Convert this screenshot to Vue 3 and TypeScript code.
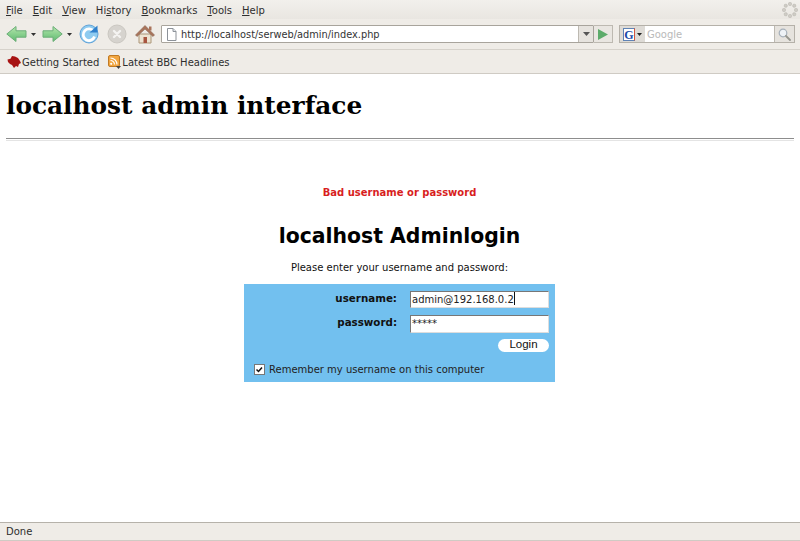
<script setup lang="ts">
const menus: [string, string, string][] = [
  ['', 'F', 'ile'],
  ['', 'E', 'dit'],
  ['', 'V', 'iew'],
  ['Hi', 's', 'tory'],
  ['', 'B', 'ookmarks'],
  ['', 'T', 'ools'],
  ['', 'H', 'elp'],
]
const dots = Array.from({ length: 8 }, (_, i) => {
  const a = (i * Math.PI) / 4
  return { x: 8 + 6 * Math.cos(a) - 1.5, y: 8 + 6 * Math.sin(a) - 1.5 }
})
</script>

<template>
  <div class="window">
    <div class="menubar">
      <span v-for="m in menus" :key="m[2]" class="menu">{{ m[0] }}<u>{{ m[1] }}</u>{{ m[2] }}</span>
      <svg class="throbber" width="16" height="16" viewBox="0 0 16 16">
        <rect v-for="(d, i) in dots" :key="i" :x="d.x" :y="d.y" width="3" height="3" rx="1" fill="#cfccc6" stroke="#b5b2ab" stroke-width=".5" />
      </svg>
    </div>

    <div class="toolbar">
      <svg class="ic" width="21" height="20" viewBox="0 0 21 20">
        <defs>
          <linearGradient id="arrow" x1="0" y1="0" x2="0" y2="1">
            <stop offset="0" stop-color="#b4e6ac" />
            <stop offset="1" stop-color="#5fbb70" />
          </linearGradient>
        </defs>
        <path d="M.8 10 10 2.500v4.300h10v6.400H10v4.300z" fill="url(#arrow)" stroke="#6cae78" stroke-linejoin="round" />
      </svg>
      <svg class="drop" width="5" height="3" viewBox="0 0 5 3"><path d="M0 0h5L2.500 3z" fill="#333" /></svg>
      <svg class="ic" width="21" height="20" viewBox="0 0 21 20">
        <path d="M20.200 10 11 2.500v4.300H1v6.400h10v4.300z" fill="url(#arrow)" stroke="#6cae78" stroke-linejoin="round" />
      </svg>
      <svg class="drop" width="5" height="3" viewBox="0 0 5 3"><path d="M0 0h5L2.500 3z" fill="#333" /></svg>
      <svg class="ic" width="20" height="20" viewBox="0 0 20 20">
        <circle cx="10" cy="10" r="9" fill="#8ecbf0" stroke="#62a3d8" />
        <path d="M14.800 7.500A5.800 5.800 0 1 0 15.500 12.500" fill="none" stroke="#fff" stroke-width="2.800" />
        <path d="M10.500 8.500h8V1.500z" fill="#2f80cc" />
      </svg>
      <svg class="ic stop" width="20" height="20" viewBox="0 0 20 20">
        <circle cx="10" cy="10" r="9" fill="#d6d3ce" stroke="#cac7c1" />
        <path d="m7 7 6 6m0-6-6 6" stroke="#f4f3f1" stroke-width="2.400" stroke-linecap="round" />
      </svg>
      <svg class="ic home" width="20" height="20" viewBox="0 0 20 20">
        <path d="M4 10h12v9H4z" fill="#eee4d2" stroke="#ab9678" />
        <path d="M.5 11 10 1.500 19.500 11 18 12.500 10 5 2 12.500z" fill="#a9735a" stroke="#8a6a55" stroke-width=".6" />
        <path d="M8.500 13h3.500v6H8.500z" fill="#a8553f" />
        <path d="M14 2.500h2.500v4H14z" fill="#a9735a" />
      </svg>

      <div class="urlbar">
        <svg class="page" width="11" height="13" viewBox="0 0 11 13">
          <path d="M1.500.5h5.500l3 3v9h-8.500z" fill="#fff" stroke="#8d9299" />
          <path d="M7 .5v3h3" fill="#dfe3e8" stroke="#8d9299" />
        </svg>
        <span class="url">http://localhost/serweb/admin/index.php</span>
        <span class="urldrop"><svg width="7" height="4" viewBox="0 0 7 4"><path d="M0 0h7L3.500 4z" fill="#555" /></svg></span>
      </div>
      <span class="go"><svg width="10" height="11" viewBox="0 0 10 11"><path d="M0 0 10 5.500 0 11z" fill="#5cab6a" /></svg></span>

      <div class="search">
        <span class="engine">
          <span class="g">G</span>
          <svg width="5" height="3" viewBox="0 0 5 3"><path d="M0 0h5L2.500 3z" fill="#222" /></svg>
        </span>
        <span class="placeholder">Google</span>
        <span class="mag">
          <svg width="13" height="13" viewBox="0 0 13 13">
            <circle cx="5" cy="5" r="3.800" fill="#eef2f6" stroke="#a6b0ba" stroke-width="1.200" />
            <path d="m8 8 4 4" stroke="#96968f" stroke-width="1.800" stroke-linecap="round" />
          </svg>
        </span>
      </div>
    </div>

    <div class="bookmarks">
      <span class="bm">
        <svg width="14" height="14" viewBox="0 0 14 14">
          <path d="M1 7 .5 4.500l3-.7L5 1l3 .5 3 1.500 2 3 1 2-2 1-1 3-2-1-2 2-2-3-2-1z" fill="#a81414" />
        </svg>
        Getting Started
      </span>
      <span class="bm">
        <svg width="13" height="14" viewBox="0 0 13 14">
          <rect x=".5" y=".5" width="11" height="11" rx="1.500" fill="#f2a640" stroke="#c07a24" />
          <circle cx="3.200" cy="8.800" r="1.100" fill="#fff" />
          <path d="M2.500 5.500a4 4 0 0 1 4 4M2.500 3a6.500 6.500 0 0 1 6.500 6.500" fill="none" stroke="#fff" stroke-width="1.200" />
          <path d="M8 11h5l-2.500 3z" fill="#444" />
        </svg>
        Latest BBC Headlines
      </span>
    </div>

    <main class="content">
      <h1>localhost admin interface</h1>
      <hr />
      <p class="error">Bad username or password</p>
      <h2>localhost Adminlogin</h2>
      <p class="hint">Please enter your username and password:</p>
      <form class="login" @submit.prevent>
        <div class="row first">
          <span class="lbl">username:</span>
          <div class="field">admin@192.168.0.2<i class="caret"></i></div>
        </div>
        <div class="row second">
          <span class="lbl">password:</span>
          <div class="field pw">*****</div>
        </div>
        <div class="btnrow"><button type="button">Login</button></div>
        <div class="remember">
          <span class="check">
            <svg width="9" height="9" viewBox="0 0 9 9"><path d="M1.500 4.500 3.500 6.500 7 2.500" fill="none" stroke="#111" stroke-width="1.500" /></svg>
          </span>
          Remember my username on this computer
        </div>
      </form>
    </main>

    <div class="status">Done</div>
  </div>
</template>

<style>
html, body { margin: 0; background: #fff; }
</style>

<style scoped>
.window {
  width: 800px;
  height: 541px;
  display: flex;
  flex-direction: column;
  overflow: hidden;
  font-family: "DejaVu Sans", sans-serif;
  font-size: 10px;
  color: #2e2e2e;
  background: #fff;
}
.menubar {
  height: 19px;
  flex: none;
  display: flex;
  align-items: center;
  gap: 10px;
  padding: 1px 2px 0 6px;
  box-sizing: border-box;
  background: linear-gradient(#f2f0ec, #e9e6e1);
}
.menu u { text-underline-offset: 1px; }
.throbber { margin-left: auto; }
.toolbar {
  height: 31px;
  flex: none;
  display: flex;
  align-items: center;
  padding: 0 5px 0 6px;
  background: #efece7;
  border-bottom: 1px solid #d6d2cb;
  box-sizing: border-box;
}
.ic { flex: none; }
.drop { flex: none; margin: 0 6px 0 4px; }
.drop + .ic + .drop { margin-right: 7px; }
.stop { margin-left: 8px; }
.home { margin-left: 8px; margin-right: 6px; }
.urlbar {
  width: 433px;
  height: 18px;
  flex: none;
  display: flex;
  align-items: center;
  background: #fff;
  border: 1px solid #a8a49c;
  box-sizing: border-box;
  border-radius: 1px;
}
.page { margin: 0 4px 0 4px; flex: none; }
.url { flex: 1; color: #333; font-size: 9.800px; }
.urldrop {
  width: 14px;
  height: 16px;
  display: flex;
  align-items: center;
  justify-content: center;
  background: #e6e3de;
  border-left: 1px solid #bdb9b1;
}
.go {
  width: 19px;
  height: 18px;
  flex: none;
  display: flex;
  align-items: center;
  justify-content: center;
  border: 1px solid #bdb9b1;
  border-left: none;
  box-sizing: border-box;
  background: #e9e6e1;
}
.search {
  width: 176px;
  height: 18px;
  flex: none;
  margin-left: 6px;
  display: flex;
  align-items: center;
  background: #fff;
  border: 1px solid #b5b1a9;
  box-sizing: border-box;
}
.engine {
  width: 25px;
  height: 16px;
  display: flex;
  align-items: center;
  gap: 2px;
  padding-left: 3px;
  box-sizing: border-box;
  background: #dedbd6;
}
.g {
  width: 12px;
  height: 13px;
  text-align: center;
  font: bold 12px/12px "Liberation Serif", serif;
  color: #1c49a8;
  background: #fff;
  border: 1px solid #5f83b5;
  border-right-color: #d4543f;
  box-sizing: border-box;
}
.placeholder { flex: 1; padding-left: 2px; color: #b9b9b9; }
.mag {
  width: 19px;
  height: 16px;
  display: flex;
  align-items: center;
  justify-content: center;
  background: #e6e3de;
  border-left: 1px solid #bdb9b1;
}
.bookmarks {
  height: 24px;
  flex: none;
  display: flex;
  align-items: center;
  gap: 9px;
  padding: 1px 0 0 7px;
  background: #efece7;
  border-bottom: 1px solid #cfcbc4;
  box-sizing: border-box;
}
.bm { display: flex; align-items: center; gap: 1px; }
.content {
  flex: 1;
  min-height: 0;
  padding: 0 7px 0 6px;
  color: #000;
}
h1 {
  margin: 17px 0 0;
  font: bold 24.800px/30px "DejaVu Serif", serif;
}
hr {
  margin: 17px -1px 0 0;
  height: 1px;
  border: none;
  border-top: 1px solid #8d8d8d;
  border-bottom: 1px solid #e4e4e4;
}
.error {
  margin: 45px 0 0;
  text-align: center;
  font-weight: bold;
  line-height: 13px;
  color: #d81e1e;
}
h2 {
  margin: 24px 0 0;
  text-align: center;
  font: bold 20.400px/26px "DejaVu Sans", sans-serif;
}
.hint {
  margin: 12px 0 0;
  text-align: center;
  line-height: 13px;
  color: #111;
}
.login {
  width: 311px;
  height: 98px;
  margin: 10px auto 0;
  box-sizing: border-box;
  padding: 7px 6px 0 10px;
  background: #72c0ef;
}
.row {
  display: flex;
  align-items: center;
  justify-content: flex-end;
}
.first { height: 17px; margin-bottom: 7px; }
.second { height: 18px; margin-bottom: 6px; }
.lbl { font-size: 10.300px; font-weight: bold; margin-right: 13px; padding-bottom: 4px; color: #111; }
.field {
  width: 139px;
  height: 100%;
  line-height: 16px;
  box-sizing: border-box;
  padding-left: 1px;
  background: #fff;
  border: 1px solid #777;
  border-right-color: #ddd;
  border-bottom-color: #ddd;
  color: #222;
}
.pw { line-height: 15px; }
.caret {
  display: inline-block;
  width: 1px;
  height: 13px;
  background: #111;
  vertical-align: -2px;
}
.btnrow { display: flex; justify-content: flex-end; }
button {
  width: 51px;
  height: 13px;
  padding: 0 0 2px;
  border: none;
  border-radius: 7px;
  background: #fff;
  font: 11.500px/11px "Liberation Sans", sans-serif;
  color: #111;
}
.remember {
  display: flex;
  align-items: center;
  gap: 4px;
  margin-top: 11px;
  line-height: 13px;
  color: #222;
}
.check {
  width: 9px;
  height: 9px;
  display: flex;
  align-items: center;
  justify-content: center;
  background: #fff;
  border: 1px solid #777;
}
.status {
  height: 19px;
  flex: none;
  box-sizing: border-box;
  padding-left: 6px;
  line-height: 17px;
  background: #efece7;
  border-top: 1px solid #b6b2aa;
  border-bottom: 1px solid #cfcbc4;
}
</style>
